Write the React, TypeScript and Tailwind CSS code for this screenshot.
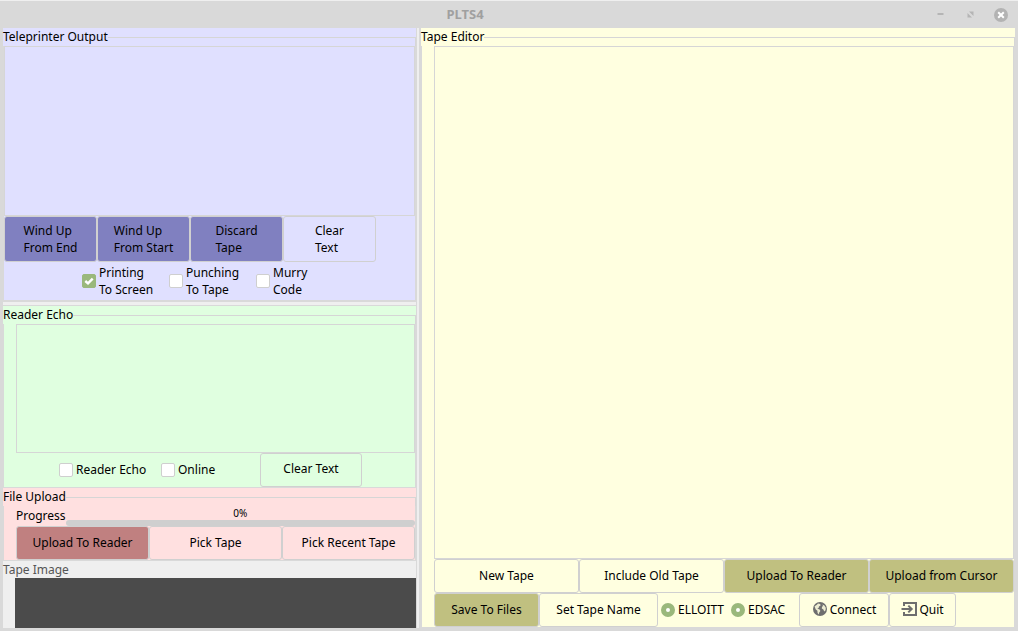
import type { ReactNode } from 'react';

function Legend({ children, htmlFor }: { children: string; htmlFor?: string }) {
  return (
    <div className="flex h-[18px] shrink-0">
      <label htmlFor={htmlFor} className="leading-[18px]">
        {children}
      </label>
      <div className="h-[9px] flex-1 self-end border-t border-r border-[#d6d6d6]" />
    </div>
  );
}

function Button({ children, className = '' }: { children: ReactNode; className?: string }) {
  return (
    <button
      type="button"
      className={`flex items-center justify-center rounded-[3px] border border-[#d0d0d0] whitespace-nowrap ${className}`}
    >
      {children}
    </button>
  );
}

function Check({ children, checked, className = '' }: { children: ReactNode; checked?: boolean; className?: string }) {
  return (
    <label className={`flex items-center gap-[3px] whitespace-nowrap ${className}`}>
      <span className="relative size-3.5 shrink-0">
        <input
          type="checkbox"
          defaultChecked={checked}
          className="peer block size-3.5 appearance-none rounded-[2px] border border-[#cfcfcf] bg-white checked:border-[#9ab87c] checked:bg-[#9ab87c]"
        />
        <svg
          viewBox="0 0 14 14"
          className="pointer-events-none absolute inset-0 hidden size-3.5 peer-checked:block"
          fill="none"
          stroke="white"
          strokeWidth="2.4"
        >
          <path d="M3.3 7 L6 9.4 L10.7 4.6" />
        </svg>
      </span>
      <span>{children}</span>
    </label>
  );
}

function Radio({ label, name }: { label: string; name: string }) {
  return (
    <label className="flex items-center gap-[3px]">
      <input
        type="radio"
        name={name}
        defaultChecked
        className="size-3.5 appearance-none rounded-full border-[5px] border-[#9ab87c] bg-white"
      />
      <span className="pb-0.5">{label}</span>
    </label>
  );
}

function GlobeIcon() {
  return (
    <svg viewBox="0 0 16 16" className="size-4" aria-hidden="true">
      <circle cx="8" cy="8" r="7" fill="#6e6e6e" />
      <path
        d="M2.6 5.2 L4.6 4 L6 2.6 L8.2 3 L8.6 4.6 L7 5.6 L6.6 7 L5.2 7.4 L7.6 8.6 L8.4 10 L7.2 11.4 L6.8 13.4 L5.6 12 L5.4 9.8 L3.6 8.2z"
        fill="#ededd2"
      />
      <path d="M10.2 3.4 L12.4 4.4 L13.8 6.8 L13.6 9.2 L12.2 10.4 L11.4 8.4 L9.8 7.6 L10 5.8 L11.2 5z" fill="#ededd2" />
    </svg>
  );
}

function ExitIcon() {
  return (
    <svg viewBox="0 0 16 16" className="size-4" fill="none" stroke="#6e6e6e" strokeWidth="2" aria-hidden="true">
      <path d="M3 5 V2 H15 V14 H3 V11" />
      <path d="M0.5 8 H10 M7.3 4.6 L10.7 8 L7.3 11.4" />
    </svg>
  );
}

const twoLine = 'h-[46px] w-[93px] text-left';
const oneLine = 'h-[34px] pb-0.5';

export default function App() {
  return (
    <div className="flex min-h-screen flex-col bg-[#d9d9d9] font-['Noto_Sans',sans-serif] text-[12px] leading-[17px] text-black">
      <header className="flex h-7 items-center border-t border-[#efefef]">
        <h1 className="flex-1 text-center text-[13px] font-bold text-[#a0a0a0]">PLTS4</h1>
        <div className="flex w-[88px] items-center justify-end pr-2.5">
          <button type="button" aria-label="Minimize" className="mr-[23px]">
            <svg viewBox="0 0 7 7" className="size-[7px]">
              <path d="M0.5 2h6v2h-6z" fill="#b5b5b5" />
            </svg>
          </button>
          <button type="button" aria-label="Maximize" className="mr-5">
            <svg viewBox="0 0 7 7" className="size-[7px]" fill="#b5b5b5">
              <path d="M2 0.5h4.5v4.5zM0.5 2v4.5h4.5z" />
            </svg>
          </button>
          <button type="button" aria-label="Close">
            <svg viewBox="0 0 14 14" className="size-3.5">
              <circle cx="7" cy="7" r="7" fill="#b3b3b3" />
              <path d="M4.2 4.2l5.6 5.6M9.8 4.2l-5.6 5.6" stroke="white" strokeWidth="2" />
            </svg>
          </button>
        </div>
      </header>

      <main className="grid flex-1 grid-cols-[413fr_5px_594fr] px-[3px] pb-[3px]">
        <div className="flex min-w-0 flex-col bg-[#efefef]">
          <section className="mb-[3px] border-b-2 border-[#d9d9d9] bg-[#e0e0ff]">
            <Legend htmlFor="output">Teleprinter Output</Legend>
            <div className="border-x border-[#d9d9d9]">
              <textarea
                id="output"
                className="block h-[170px] w-full resize-none border border-[#d6d6d6] bg-transparent outline-none"
              />
              <div className="flex">
                <Button className={`${twoLine} bg-[#8080c0]`}>
                  <span>Wind Up<br />From End</span>
                </Button>
                <Button className={`${twoLine} bg-[#8080c0]`}>
                  <span>Wind Up<br />From Start</span>
                </Button>
                <Button className={`${twoLine} bg-[#8080c0]`}>
                  <span>Discard<br />Tape</span>
                </Button>
                <Button className={twoLine}>
                  <span>Clear<br />Text</span>
                </Button>
              </div>
              <div className="flex h-[38px] items-center pl-[78px]">
                <Check checked className="w-[87px]">Printing<br />To Screen</Check>
                <Check className="w-[87px]">Punching<br />To Tape</Check>
                <Check className="w-[87px]">Murry<br />Code</Check>
              </div>
            </div>
          </section>

          <section className="border-y border-[#d9d9d9] bg-[#e0ffe0]">
            <Legend htmlFor="echo">Reader Echo</Legend>
            <div className="border-x border-[#d9d9d9]">
              <div className="pl-3">
                <textarea
                  id="echo"
                  className="block h-[129px] w-full resize-none border border-[#d6d6d6] bg-transparent outline-none"
                />
              </div>
              <div className="flex items-center pl-[55px] leading-4">
                <Check className="w-[102px]">Reader Echo</Check>
                <Check className="w-[99px]">Online</Check>
                <Button className={`${oneLine} w-[102px]`}>Clear Text</Button>
              </div>
            </div>
          </section>

          <section className="border-b border-[#d9d9d9] bg-[#ffe0e0]">
            <Legend>File Upload</Legend>
            <div className="border-x border-[#d9d9d9] pl-3">
              <div className="flex h-5">
                <span className="leading-[19px]">Progress</span>
                <div className="flex flex-1 flex-col">
                  <span className="text-center text-[10px] leading-[14px]">0%</span>
                  <div role="progressbar" aria-label="Progress" aria-valuenow={0} className="h-1.5 rounded-full bg-[#cfcfcf]" />
                </div>
              </div>
              <div className="grid grid-cols-3">
                <Button className={`${oneLine} bg-[#c08080]`}>Upload To Reader</Button>
                <Button className={oneLine}>Pick Tape</Button>
                <Button className={oneLine}>Pick Recent Tape</Button>
              </div>
            </div>
          </section>

          <section className="flex flex-1 flex-col">
            <h2 className="text-[#555555]">Tape Image</h2>
            <div className="ml-3 min-h-[50px] flex-1 bg-[#4b4b4b]" />
          </section>
        </div>

        <div className="border-r-2 border-l border-[#d9d9d9] bg-[#efefef]" />

        <section className="flex min-w-0 flex-col border-b border-[#d9d9d9] bg-[#ffffe0]">
          <Legend htmlFor="editor">Tape Editor</Legend>
          <div className="flex flex-1 flex-col border-x border-[#d9d9d9] pl-3">
            <textarea
              id="editor"
              className="block w-full flex-1 resize-none border border-[#d6d6d6] bg-transparent outline-none"
            />
            <div className="grid grid-cols-4">
              <Button className={oneLine}>New Tape</Button>
              <Button className={oneLine}>Include Old Tape</Button>
              <Button className={`${oneLine} bg-[#c0c080]`}>Upload To Reader</Button>
              <Button className={`${oneLine} bg-[#c0c080]`}>Upload from Cursor</Button>
            </div>
            <div className="flex items-center">
              <Button className={`${oneLine} w-[105px] bg-[#c0c080]`}>Save To Files</Button>
              <Button className={`${oneLine} w-[119px]`}>Set Tape Name</Button>
              <div className="flex w-[141px] gap-[7px] pl-[3px]">
                <Radio label="ELLOITT" name="elloitt" />
                <Radio label="EDSAC" name="edsac" />
              </div>
              <Button className={`${oneLine} w-[90px] gap-0.5`}>
                <GlobeIcon />
                Connect
              </Button>
              <Button className={`${oneLine} w-[67px] gap-0.5`}>
                <ExitIcon />
                Quit
              </Button>
            </div>
          </div>
        </section>
      </main>
    </div>
  );
}
